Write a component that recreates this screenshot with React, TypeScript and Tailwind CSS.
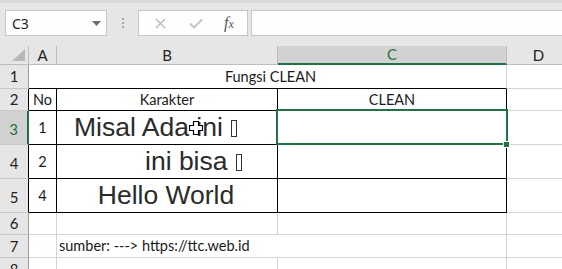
import React from "react";

const GRID = "border-[#d4d4d4]";

function Box() {
  return <span className="inline-block w-[6px] h-[17px] border border-[#333] ml-[8px] align-[-1px]" />;
}

function CellCursor() {
  return (
    <svg className="absolute left-[189px] top-[75px]" width="14" height="14" viewBox="0 0 14 14">
      <path d="M4.5 0.5h5v4h4v5h-4v4h-5v-4h-4v-5h4z" fill="#fff" stroke="#000" strokeWidth="1.2" />
    </svg>
  );
}

function FormulaBar() {
  return (
    <div className="bg-[#e6e6e6] h-[46px] flex flex-col">
      <div className="h-[3px] bg-[#d9d9d9]" />
      <div className="flex items-start pt-[7px] pl-[5px] gap-0">
        <div className="w-[102px] h-[26px] bg-[#fefefe] border border-[#c6c6c6] flex items-center justify-between pl-[6px] pr-[5px]">
          <span className="font-['Noto_Sans',sans-serif] text-[14px] text-[#222]">C3</span>
          <svg width="9" height="5" viewBox="0 0 9 5">
            <path d="M0 0h9L4.5 5z" fill="#6d6d6d" />
          </svg>
        </div>
        <div className="w-[31px] h-[26px] flex flex-col items-center justify-center gap-[2px]">
          <span className="w-[2px] h-[2px] bg-[#a5a5a5]" />
          <span className="w-[2px] h-[2px] bg-[#a5a5a5]" />
          <span className="w-[2px] h-[2px] bg-[#a5a5a5]" />
        </div>
        <div className="w-[110px] h-[26px] bg-[#fefefe] border border-[#c6c6c6] flex items-center">
          <svg className="ml-[16px]" width="11" height="11" viewBox="0 0 11 11">
            <path d="M1 1l9 9M10 1l-9 9" stroke="#b8b8b8" strokeWidth="1.4" />
          </svg>
          <svg className="ml-[23px]" width="14" height="11" viewBox="0 0 14 11">
            <path d="M1 5.5l4 4 8-8" stroke="#c4c4c4" strokeWidth="2" fill="none" />
          </svg>
          <span className="ml-[21px] font-['Liberation_Serif',serif] italic text-[16px] text-[#555] leading-none">
            f<span className="text-[12px]">x</span>
          </span>
        </div>
        <div className="ml-[3px] flex-1 h-[26px] bg-[#fefefe] border border-r-0 border-[#c6c6c6]" />
      </div>
    </div>
  );
}

export default function App() {
  const head = "bg-[#e6e6e6] flex items-center justify-center font-['Lato',sans-serif] text-[15px] text-[#222]";
  const rowHead = `${head} border-b border-b-[#c9c9c9] border-r`;
  const cell = `border-r border-b ${GRID} bg-white`;
  const tbl = "border-r border-b border-black bg-white flex items-center justify-center font-['Lato',sans-serif] text-[14.5px] text-[#1a1a1a]";
  const big = "border-r border-b border-black bg-white flex items-center font-['Liberation_Sans',Arial,sans-serif] text-[26.5px] text-[#2b2b2b] whitespace-nowrap";

  return (
    <div className="w-[562px] h-[269px] overflow-hidden bg-white">
      <FormulaBar />
      <div className="relative grid grid-cols-[29px_28px_221px_229px_64px_1fr] grid-rows-[19px_24px_22px_34px_34px_34px_22px_23px_1fr] h-[223px]">
        {/* column headers */}
        <div className="bg-[#e6e6e6] border-r border-b border-[#bdbdbd] relative">
          <svg className="absolute right-[3px] bottom-[3px]" width="13" height="12" viewBox="0 0 13 12">
            <path d="M13 0V12H0z" fill="#b7b7b7" />
          </svg>
        </div>
        <div className={`${head} border-r border-b border-[#bdbdbd]`}>A</div>
        <div className={`${head} border-r border-b border-[#bdbdbd]`}>B</div>
        <div className={`${head} !bg-[#d2d2d2] !text-[#217346] border-r border-r-[#bdbdbd] border-b-2 border-b-[#217346]`}>C</div>
        <div className={`${head} border-r border-b border-[#bdbdbd]`}>D</div>
        <div className={`${head} border-b border-[#bdbdbd]`} />

        {/* row 1 */}
        <div className={`${rowHead} border-r-[#9e9e9e]`}>1</div>
        <div className="col-span-3 border-b border-black border-r border-r-[#d4d4d4] bg-white flex items-center justify-center font-['Lato',sans-serif] text-[14.5px] text-[#1a1a1a] pl-[6px]">
          Fungsi CLEAN
        </div>
        <div className={cell} />
        <div className={cell} />

        {/* row 2 */}
        <div className={`${rowHead} border-r-black`}>2</div>
        <div className={tbl}>No</div>
        <div className={tbl}>Karakter</div>
        <div className={tbl}>CLEAN</div>
        <div className={cell} />
        <div className={cell} />

        {/* row 3 */}
        <div className={`${rowHead} !bg-[#d2d2d2] !text-[#217346] border-r-2 border-r-[#217346] pt-[3px]`}>3</div>
        <div className={tbl}>1</div>
        <div className={`${big} pl-[17px] pt-[1px]`}>
          Misal Ada ini
          <Box />
        </div>
        <div className={tbl} />
        <div className={cell} />
        <div className={cell} />

        {/* row 4 */}
        <div className={`${rowHead} border-r-black pt-[4px]`}>4</div>
        <div className={tbl}>2</div>
        <div className={`${big} pl-[88px] pt-[1px]`}>
          ini bisa
          <Box />
        </div>
        <div className={tbl} />
        <div className={cell} />
        <div className={cell} />

        {/* row 5 */}
        <div className={`${rowHead} border-r-black pt-[4px]`}>5</div>
        <div className={tbl}>4</div>
        <div className={`${big} justify-center pt-[1px] pr-[2px]`}>Hello World</div>
        <div className={tbl} />
        <div className={cell} />
        <div className={cell} />

        {/* row 6 */}
        <div className={`${rowHead} border-r-[#9e9e9e]`}>6</div>
        <div className={cell} />
        <div className={cell} />
        <div className={cell} />
        <div className={cell} />
        <div className={cell} />

        {/* row 7 */}
        <div className={`${rowHead} border-r-[#9e9e9e]`}>7</div>
        <div className={cell} />
        <div className={`border-b ${GRID} bg-white flex items-center pl-[2px] font-['Lato',sans-serif] text-[14.5px] text-[#1a1a1a] whitespace-nowrap overflow-visible z-10`}>
          sumber: ---&gt; https://ttc.web.id
        </div>
        <div className={cell} />
        <div className={cell} />
        <div className={cell} />

        {/* row 8 */}
        <div className={`${rowHead} border-r-[#9e9e9e] items-start`}>8</div>
        <div className={cell} />
        <div className={cell} />
        <div className={cell} />
        <div className={cell} />
        <div className={cell} />

        {/* selection on C3 */}
        <div className="absolute left-[276px] top-[63px] w-[232px] h-[36px] border-2 border-[#217346] pointer-events-none" />
        <div className="absolute left-[503px] top-[95px] w-[7px] h-[7px] bg-[#217346] border border-white pointer-events-none" />
        <CellCursor />
      </div>
    </div>
  );
}
